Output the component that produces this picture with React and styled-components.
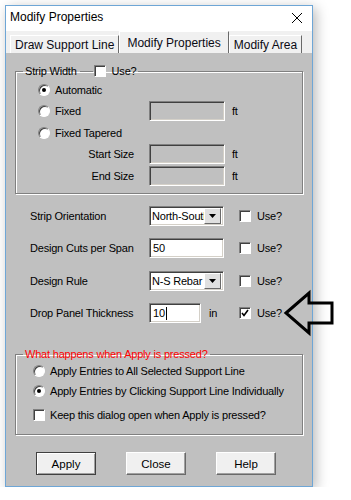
import styled, { createGlobalStyle } from "styled-components";

const GlobalStyle = createGlobalStyle`
  html, body {
    margin: 0;
    background: #fff;
  }
  body {
    font-family: "Liberation Sans", Arial, sans-serif;
    color: #000;
  }
`;

const Window = styled.div`
  position: relative;
  box-sizing: border-box;
  width: 308px;
  height: 482px;
  margin: 5px 0 0 5px;
  border: 1px solid #6ea6d6;
  box-shadow: 3px 3px 12px rgba(0, 0, 0, 0.28);
  display: flex;
  flex-direction: column;
  background: #c0c0c0;
`;

const TitleBar = styled.div`
  height: 25px;
  background: #fff;
  display: flex;
  align-items: flex-start;
  justify-content: space-between;
  padding: 4px 10px 0 4px;
  box-sizing: border-box;
  font-size: 12px;
  line-height: 14px;
`;

const CloseIcon = styled.svg`
  margin-top: 3px;
`;

const TabStrip = styled.div`
  height: 22px;
  background: #f0f0f0;
  display: flex;
  align-items: flex-end;
  padding-left: 4px;
`;

const Tab = styled.div`
  box-sizing: border-box;
  height: ${(p) => (p.$active ? "22px" : "18px")};
  padding: 0 ${(p) => (p.$active ? "7px" : "4px")};
  border-top: 1px solid #fff;
  border-left: 1px solid #fff;
  border-right: 1px solid #696969;
  background: #f0f0f0;
  display: flex;
  align-items: center;
  font-size: 12px;
  color: #0a0a14;
  white-space: nowrap;
`;

const Panel = styled.div`
  flex: 1;
  display: flex;
  flex-direction: column;
  padding-top: 11px;
  font-size: 11px;
  letter-spacing: -0.2px;
`;

const Group = styled.fieldset`
  margin: ${(p) => p.$top || 0} 9px 0;
  padding: ${(p) => p.$pad || "1px 0 6px 0"};
  min-width: 0;
  border: 1px solid #808080;
  box-shadow: 1px 1px 0 #fff, inset 1px 1px 0 #fff;
`;

const Legend = styled.legend`
  margin-left: 7px;
  padding: 0 2px;
  line-height: 14px;
  color: ${(p) => p.$color || "#000"};
  display: flex;
  align-items: center;
`;

const Dash = styled.span`
  width: 13px;
  height: 1px;
  margin: 0 1px 0 3px;
  background: #808080;
  box-shadow: 0 1px 0 #fff;
`;

const Radio = styled.span`
  box-sizing: border-box;
  width: 12px;
  height: 12px;
  border-radius: 50%;
  border: 1px solid;
  border-color: #808080 #fff #fff #808080;
  box-shadow: inset 1px 1px 0 #404040;
  background: #fff;
  display: flex;
  align-items: center;
  justify-content: center;
  flex-shrink: 0;

  &::after {
    content: "";
    width: 4px;
    height: 4px;
    border-radius: 50%;
    background: #000;
    display: ${(p) => (p.$on ? "block" : "none")};
  }
`;

const Box = styled.span`
  box-sizing: border-box;
  width: 12px;
  height: 12px;
  border: 1px solid;
  border-color: #808080 #fff #fff #808080;
  box-shadow: inset 1px 1px 0 #404040;
  background: #fff;
  display: flex;
  align-items: center;
  justify-content: center;
  flex-shrink: 0;
`;

const Choice = styled.label`
  display: flex;
  align-items: center;
  gap: ${(p) => p.$gap || "5px"};
  padding-left: ${(p) => p.$indent || "0"};
  white-space: nowrap;
`;

const StripRow = styled.div`
  display: grid;
  grid-template-columns: 133px 76px auto;
  align-items: center;
  height: 21.5px;
`;

const SizeLabel = styled.span`
  text-align: right;
  padding-right: 15px;
`;

const Field = styled.div`
  box-sizing: border-box;
  width: ${(p) => p.$w || "76px"};
  height: 20px;
  border: 1px solid;
  border-color: #808080 #fff #fff #808080;
  box-shadow: inset 1px 1px 0 #404040, inset -1px -1px 0 #d4d0c8;
  background: ${(p) => (p.$disabled ? "#c0c0c0" : "#fff")};
  display: flex;
  align-items: center;
  padding-left: 3px;
  overflow: hidden;
  white-space: nowrap;
`;

const Caret = styled.span`
  width: 1px;
  height: 13px;
  margin-left: 1px;
  background: #000;
`;

const Unit = styled.span`
  margin-left: ${(p) => p.$gap || "7px"};
`;

const Settings = styled.div`
  display: flex;
  flex-direction: column;
  gap: 12.5px;
  margin-top: 12px;
  padding-left: 24px;
`;

const SettingRow = styled.div`
  display: grid;
  grid-template-columns: 119px 90px auto;
  align-items: center;
  height: 20px;
`;

const Control = styled.div`
  display: flex;
  align-items: center;
`;

const Combo = styled(Field)`
  width: 75px;
  padding-left: 2px;
  padding-right: 2px;
  justify-content: space-between;
`;

const ComboText = styled.span`
  overflow: hidden;
  flex: 1;
`;

const DropButton = styled.span`
  box-sizing: border-box;
  width: 17px;
  height: 16px;
  flex-shrink: 0;
  background: #e0e0e0;
  border: 1px solid;
  border-color: #fff #696969 #696969 #fff;
  display: flex;
  align-items: center;
  justify-content: center;
`;

const OptionList = styled.div`
  display: flex;
  flex-direction: column;
  padding-left: 17px;
`;

const OptionRow = styled.div`
  height: 20px;
  display: flex;
  align-items: center;
  margin-top: ${(p) => p.$gap || "0"};
`;

const ButtonRow = styled.div`
  display: flex;
  gap: 30px;
  padding-left: 30px;
  margin-top: 17px;
`;

const Button = styled.button`
  box-sizing: border-box;
  width: 60px;
  height: 23px;
  padding: 0;
  font-family: "Liberation Sans", Arial, sans-serif;
  font-size: 11.5px;
  color: #000;
  background: #f0f0f0;
  border: 1px solid;
  border-color: ${(p) =>
    p.$default ? "#404040" : "#fff #696969 #696969 #fff"};
  box-shadow: ${(p) =>
    p.$default
      ? "inset 1px 1px 0 #fff, inset -1px -1px 0 #a0a0a0"
      : "inset -1px -1px 0 #a0a0a0"};
`;

const Pointer = styled.svg`
  position: absolute;
  left: 278px;
  top: 285px;
  overflow: visible;
`;

const Check = () => (
  <svg width="8" height="8" viewBox="0 0 8 8">
    <path d="M1 4 L3 6.5 L7 1" fill="none" stroke="#000" strokeWidth="1.6" />
  </svg>
);

const CheckBox = ({ on }) => <Box>{on && <Check />}</Box>;

const Arrow = () => (
  <svg width="7" height="4" viewBox="0 0 7 4">
    <path d="M0 0 H7 L3.5 4 Z" fill="#000" />
  </svg>
);

const UseBox = ({ on }) => (
  <Choice $gap="6px">
    <CheckBox on={on} />
    Use?
  </Choice>
);

const App = () => {
  return (
    <>
      <GlobalStyle />
      <Window>
        <TitleBar>
          <span>Modify Properties</span>
          <CloseIcon width="10" height="10" viewBox="0 0 10 10">
            <path d="M0 0 L10 10 M10 0 L0 10" stroke="#000" strokeWidth="1" />
          </CloseIcon>
        </TitleBar>
        <TabStrip>
          <Tab>Draw Support Line</Tab>
          <Tab $active>Modify Properties</Tab>
          <Tab>Modify Area</Tab>
        </TabStrip>
        <Panel>
          <Group>
            <Legend>
              Strip Width
              <Dash />
              <CheckBox />
              <Unit $gap="6px">Use?</Unit>
            </Legend>
            <StripRow>
              <Choice $indent="22px">
                <Radio $on />
                Automatic
              </Choice>
            </StripRow>
            <StripRow>
              <Choice $indent="22px">
                <Radio />
                Fixed
              </Choice>
              <Field $disabled />
              <Unit>ft</Unit>
            </StripRow>
            <StripRow>
              <Choice $indent="22px">
                <Radio />
                Fixed Tapered
              </Choice>
            </StripRow>
            <StripRow>
              <SizeLabel>Start Size</SizeLabel>
              <Field $disabled />
              <Unit>ft</Unit>
            </StripRow>
            <StripRow>
              <SizeLabel>End Size</SizeLabel>
              <Field $disabled />
              <Unit>ft</Unit>
            </StripRow>
          </Group>

          <Settings>
            <SettingRow>
              <span>Strip Orientation</span>
              <Combo>
                <ComboText>North-South</ComboText>
                <DropButton>
                  <Arrow />
                </DropButton>
              </Combo>
              <UseBox />
            </SettingRow>
            <SettingRow>
              <span>Design Cuts per Span</span>
              <Field $w="75px">50</Field>
              <UseBox />
            </SettingRow>
            <SettingRow>
              <span>Design Rule</span>
              <Combo>
                <ComboText>N-S Rebar</ComboText>
                <DropButton>
                  <Arrow />
                </DropButton>
              </Combo>
              <UseBox />
            </SettingRow>
            <SettingRow>
              <span>Drop Panel Thickness</span>
              <Control>
                <Field $w="52px">
                  10
                  <Caret />
                </Field>
                <Unit $gap="8px">in</Unit>
              </Control>
              <UseBox on />
            </SettingRow>
          </Settings>

          <Group $top="24px" $pad="0 0 9px 0">
            <Legend $color="#ff0000">What happens when Apply is pressed?</Legend>
            <OptionList>
              <OptionRow>
                <Choice>
                  <Radio />
                  Apply Entries to All Selected Support Line
                </Choice>
              </OptionRow>
              <OptionRow>
                <Choice>
                  <Radio $on />
                  Apply Entries by Clicking Support Line Individually
                </Choice>
              </OptionRow>
              <OptionRow $gap="4px">
                <Choice>
                  <CheckBox />
                  Keep this dialog open when Apply is pressed?
                </Choice>
              </OptionRow>
            </OptionList>
          </Group>

          <ButtonRow>
            <Button $default>Apply</Button>
            <Button>Close</Button>
            <Button>Help</Button>
          </ButtonRow>
        </Panel>
        <Pointer width="50" height="46" viewBox="0 0 50 46">
          <polygon
            points="2,22 25,2 25,12 48,12 48,32 25,32 25,42"
            fill="none"
            stroke="#000"
            strokeWidth="3"
          />
        </Pointer>
      </Window>
    </>
  );
};

export default App;
